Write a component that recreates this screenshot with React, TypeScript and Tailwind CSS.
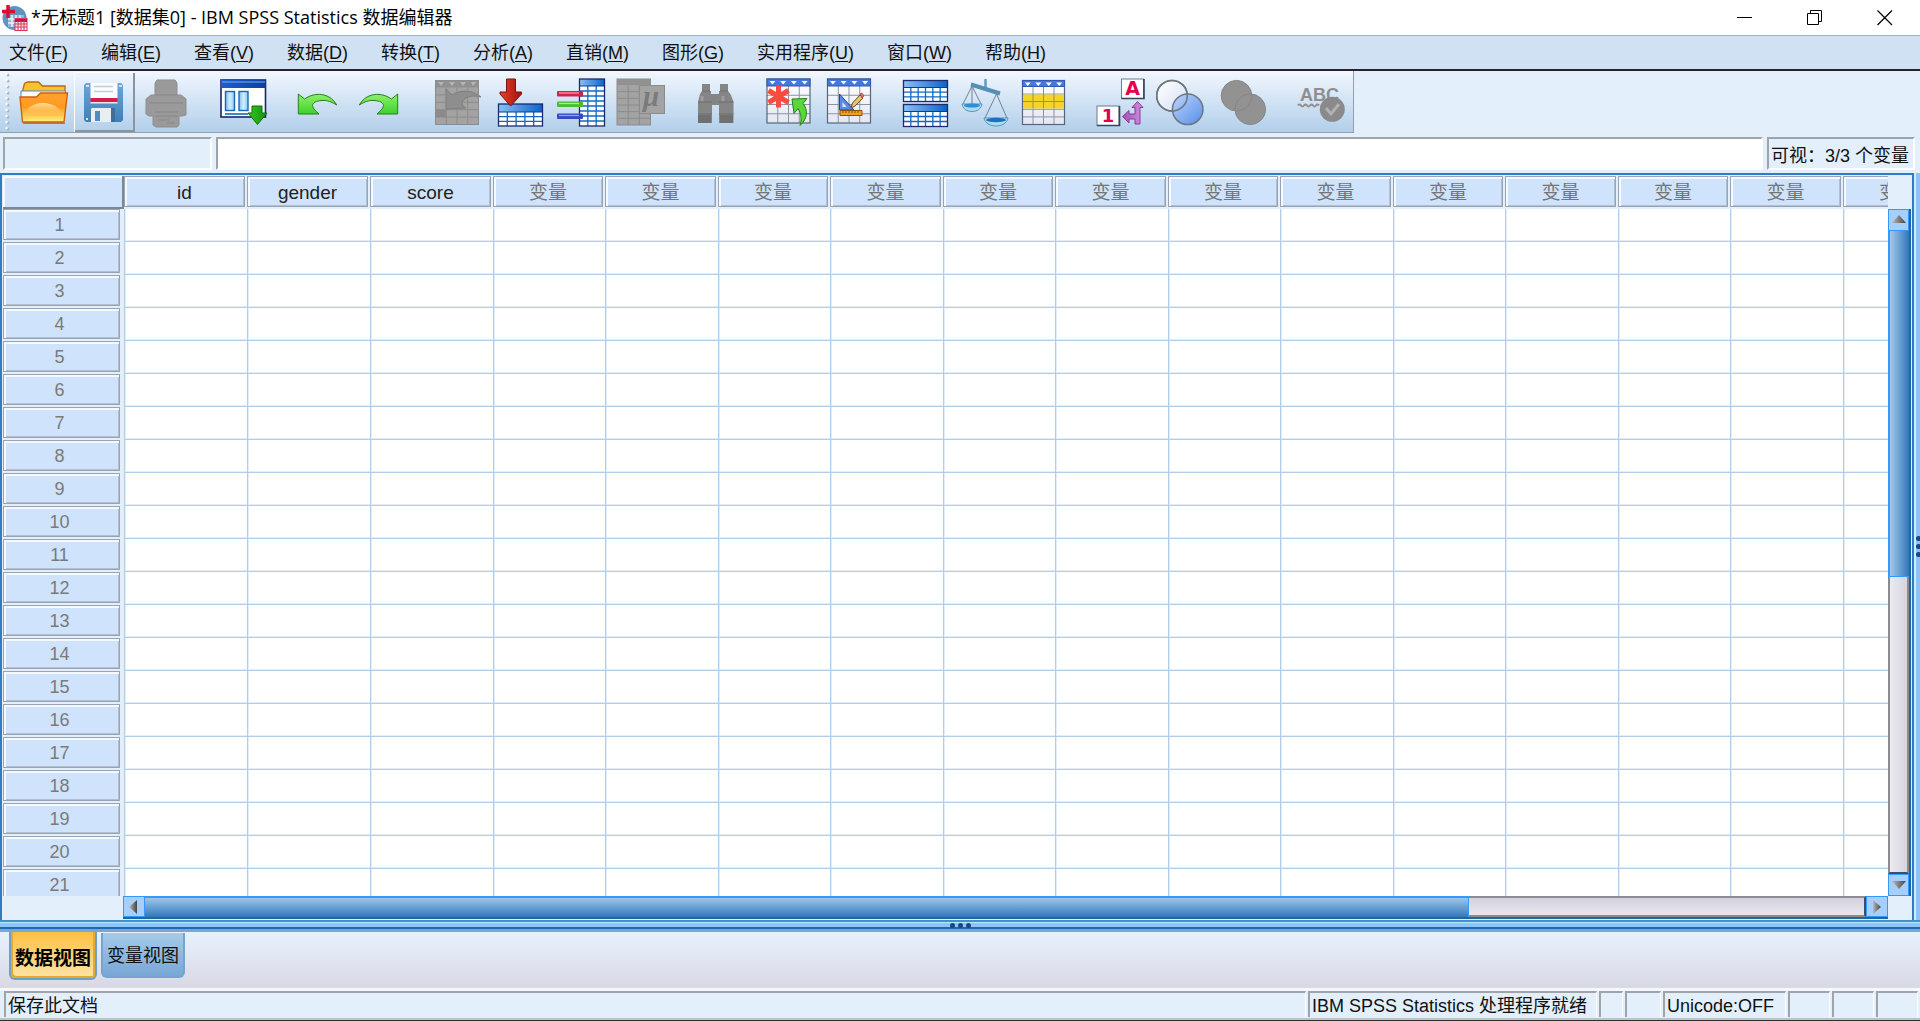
import React from 'react';

const MENUS = [
    ['文件', 'F'], ['编辑', 'E'], ['查看', 'V'], ['数据', 'D'], ['转换', 'T'], ['分析', 'A'],
    ['直销', 'M'], ['图形', 'G'], ['实用程序', 'U'], ['窗口', 'W'], ['帮助', 'H'],
];

const VARIABLES = ['id', 'gender', 'score'];
const EMPTY_COLS = Array.from({ length: 13 }, (_, i) => i);
const ROWS = Array.from({ length: 21 }, (_, i) => i + 1);

// Evenly spaced grid lines inside a box
function gridPath(x: number, y: number, w: number, h: number, cols: number, rows: number) {
    let d = '';
    for (let c = 1; c < cols; c++) d += `M${x + (w * c) / cols} ${y}v${h}`;
    for (let r = 1; r < rows; r++) d += `M${x} ${y + (h * r) / rows}h${w}`;
    return d;
}

type SheetProps = { x: number; y: number; w: number; h: number; head: number; cols: number; rows: number };

function BlueTable({ x, y, w, h, head, cols, rows }: SheetProps) {
    return (
        <g>
            <rect x={x} y={y} width={w} height={h} fill="#fff" />
            <path d={gridPath(x, y + head, w, h - head, cols, rows)} stroke="#1368c4" strokeWidth="1.3" fill="none" />
            <rect x={x} y={y} width={w} height={head} fill="url(#blueHead)" />
            <path d={`M${x} ${y + head}h${w}`} stroke="#0b3f86" />
            <rect x={x} y={y} width={w} height={h} fill="none" stroke="#1d2a6b" strokeWidth="1.3" />
        </g>
    );
}

function Sheet({ x, y, w, h, head, cols, rows }: SheetProps) {
    return (
        <g>
            <rect x={x} y={y} width={w} height={h} fill="url(#sheetBody)" />
            <path d={gridPath(x, y + head, w, h - head, cols, rows)} stroke="#8a93a3" fill="none" />
            <rect x={x} y={y} width={w} height={h} fill="none" stroke="#59647a" strokeWidth="1.2" />
            <rect x={x} y={y} width={w} height={head} fill="#4478dd" stroke="#3157b5" />
            {Array.from({ length: cols }, (_, i) => (
                <path key={i} d={`M${x + (w * (i + 0.5)) / cols - 3} ${y + 2}h6l-3 3.5z`} fill="#fff" />
            ))}
        </g>
    );
}

function GreySheet({ x, y, w, h, head, cols, rows }: SheetProps) {
    return (
        <g>
            <rect x={x} y={y} width={w} height={h} fill="#a3a3a3" stroke="#8b8b8b" />
            <path d={gridPath(x, y + head, w, h - head, cols, rows)} stroke="#8b8b8b" fill="none" />
            <rect x={x} y={y} width={w} height={head} fill="#919191" />
        </g>
    );
}

function IconDefs() {
    return (
        <svg className="absolute h-0 w-0" aria-hidden="true">
            <defs>
                <linearGradient id="blueHead" x1="0" x2="1" y1="0" y2="0">
                    <stop offset="0" stopColor="#8cc0f5" />
                    <stop offset="1" stopColor="#0b62cc" />
                </linearGradient>
                <linearGradient id="titleHead" x1="0" x2="1" y1="0" y2="0">
                    <stop offset="0" stopColor="#1b5fd0" />
                    <stop offset="1" stopColor="#0d3f9e" />
                </linearGradient>
                <linearGradient id="sheetBody" x1="0" x2="0" y1="0" y2="1">
                    <stop offset="0" stopColor="#ffffff" />
                    <stop offset="1" stopColor="#e3e7f2" />
                </linearGradient>
                <linearGradient id="folderFront" x1="0" x2="0" y1="0" y2="1">
                    <stop offset="0" stopColor="#ffa12e" />
                    <stop offset="0.5" stopColor="#ff9a20" />
                    <stop offset="1" stopColor="#fff27a" />
                </linearGradient>
                <linearGradient id="folderShine" x1="0" x2="0" y1="0" y2="1">
                    <stop offset="0" stopColor="#ffdf9a" />
                    <stop offset="1" stopColor="#ffb94a" stopOpacity="0.2" />
                </linearGradient>
                <linearGradient id="disk" x1="0" x2="0" y1="0" y2="1">
                    <stop offset="0" stopColor="#6ea6d6" />
                    <stop offset="1" stopColor="#3f7fb5" />
                </linearGradient>
                <linearGradient id="pane" x1="0" x2="1" y1="0" y2="0">
                    <stop offset="0" stopColor="#7fc0f0" />
                    <stop offset="0.5" stopColor="#d5edfc" />
                    <stop offset="1" stopColor="#8cc8f2" />
                </linearGradient>
                <linearGradient id="green" x1="0" x2="0" y1="0" y2="1">
                    <stop offset="0" stopColor="#8df26a" />
                    <stop offset="1" stopColor="#3fd02c" />
                </linearGradient>
                <linearGradient id="darkGreen" x1="0" x2="1" y1="0" y2="0">
                    <stop offset="0" stopColor="#35c81e" />
                    <stop offset="1" stopColor="#138f12" />
                </linearGradient>
                <linearGradient id="red" x1="0" x2="1" y1="0" y2="0">
                    <stop offset="0" stopColor="#e8402c" />
                    <stop offset="1" stopColor="#a1130b" />
                </linearGradient>
                <linearGradient id="purple" x1="0" x2="1" y1="0" y2="0">
                    <stop offset="0" stopColor="#a44fb5" />
                    <stop offset="1" stopColor="#d08fe0" />
                </linearGradient>
                <linearGradient id="circleWhite" x1="0" x2="1" y1="0" y2="1">
                    <stop offset="0" stopColor="#ffffff" />
                    <stop offset="1" stopColor="#d5e0f5" />
                </linearGradient>
                <linearGradient id="circleBlue" x1="0" x2="1" y1="0" y2="1">
                    <stop offset="0" stopColor="#b9d2fa" />
                    <stop offset="1" stopColor="#4c87ea" />
                </linearGradient>
                <linearGradient id="arrowGrey" x1="0" x2="1" y1="0" y2="0">
                    <stop offset="0" stopColor="#b8b8b8" />
                    <stop offset="1" stopColor="#444444" />
                </linearGradient>
            </defs>
        </svg>
    );
}

const UNDO = 'M11.3 22L17.5 27C24 22.5 31 21.5 37 23C43 24.5 47 28 49.7 33C45 30 40 28 35 28.5C29 29 26 30.5 25.5 33.5C26 37 29 39 32 42H11.3Z';

const OpenIcon = (
    <>
        <path d="M12 50.5h38l2 1H10z" stroke="#7b8794" fill="none" />
        <path d="M9 26L10 17l1.500-5.500 3-1.500h11l4 4H52v14z" fill="#fbc02d" stroke="#b76a12" strokeWidth="1.3" />
        <path d="M8 19h44.500v8H8z" fill="#f8fbff" stroke="#4a90d9" />
        <path d="M7 25h16.500l4-4H54.500L51 50H9.500z" fill="url(#folderFront)" stroke="#d0600f" strokeWidth="1.4" />
        <path d="M10 44C12 36 22 30 32 31c8 1 15 4 18 13z" fill="url(#folderShine)" />
    </>
);

const SaveIcon = (
    <>
        <path d="M10 13l2-2h35l2 2v35l-2 2H12l-2-2z" fill="url(#disk)" />
        <path d="M16.500 11h27v15h-27z" fill="#fafcfe" />
        <path d="M16.500 26h27v4h-27z" fill="#d81b48" />
        <path d="M16.500 30h27v1.500h-27z" fill="#f4e6ea" />
        <path d="M20 14.500h19M20 19.500h19" stroke="#c3cbd4" strokeWidth="1.4" />
        <path d="M17 37l1-1h22l1 1v13H17z" fill="#e9eef3" />
        <path d="M37 36h4v14h-4z" fill="#3f6f96" />
        <path d="M21 39h5v10h-5z" fill="#4d8dc2" />
        <path d="M12 14h3M45 14h3M12 47h2" stroke="#cfe3f4" strokeWidth="2" />
    </>
);

const PrintIcon = (
    <>
        <path d="M22 8h18l2 3v12h4l5 4v16l-4 1h-3v9l-2 2H21l-3-2v-9h-4l-3-2V27l5-4h4V11z" fill="#9a9a9a" stroke="#8d8d8d" />
        <path d="M20 23h22M14 31h34M20 40h23M20 44h23M23 48h11M32 51h8" stroke="#858585" strokeWidth="1.2" fill="none" />
    </>
);

const GotoIcon = (
    <>
        <rect x="10" y="8" width="44.500" height="37" fill="#fff" stroke="#1a2566" strokeWidth="1.6" />
        <rect x="10" y="8" width="44.500" height="8" fill="url(#titleHead)" />
        <path d="M11 10h43" stroke="#7ab0f0" />
        <rect x="14.500" y="19.500" width="9" height="19" fill="url(#pane)" stroke="#1668b8" strokeWidth="1.4" />
        <rect x="28" y="19.500" width="9" height="19" fill="url(#pane)" stroke="#1668b8" strokeWidth="1.4" />
        <path d="M14 42h23" stroke="#1668b8" strokeWidth="1.6" />
        <path d="M41 34h10v7h5L46.500 52.500 37 41h4z" fill="url(#darkGreen)" stroke="#0d6e10" />
    </>
);

const UndoIcon = <path d={UNDO} fill="url(#green)" stroke="#23801a" />;
const RedoIcon = <path d={UNDO} transform="matrix(-1 0 0 1 61 0)" fill="url(#green)" stroke="#23801a" />;

const RecallIcon = (
    <>
        <GreySheet x={11.5} y={8.5} w={43} h={44} head={7} cols={4} rows={5} />
        <path d="M14 10h6l-3 4zM25 10h6l-3 4zM36 10h6l-3 4zM47 10h5l-3 4z" fill="#b4b4b4" />
        <path d="M12 38h10v7H12z" fill="#8b8b8b" />
        <path d="M22 17l6 6c8-5 20-6 29 2-8-2-15-1-19 5 0 3 2 5 4 6l-20 1z" fill="#8e8e8e" stroke="#808080" />
    </>
);

const InsertCaseIcon = (
    <>
        <BlueTable x={13.5} y={32} w={44} h={22} head={8} cols={5} rows={3} />
        <path d="M21.500 7h9v13h6v2L25.700 34 15 22v-2h6.500z" fill="url(#red)" stroke="#7c120c" />
    </>
);

const InsertVarIcon = (
    <>
        <BlueTable x={33.5} y={7} w={25} h={47} head={7} cols={3} rows={8} />
        <rect x="11" y="19" width="26" height="5.500" rx="1" fill="#d3214f" />
        <rect x="11" y="29.500" width="26" height="5.500" rx="1" fill="#4cbb30" />
        <rect x="11" y="41.500" width="26" height="5.500" rx="1" fill="#3348c8" />
        <path d="M13 21h20" stroke="#ff9a9a" strokeWidth="1.300" />
        <path d="M13 31.500h20" stroke="#a8f080" strokeWidth="1.300" />
        <path d="M13 43.500h20" stroke="#8fa4ff" strokeWidth="1.300" />
    </>
);

const MuIcon = (
    <>
        <GreySheet x={10} y={7} w={33.5} h={46} head={6} cols={3} rows={6} />
        <rect x="32.500" y="13.500" width="25" height="28" fill="#a3a3a3" stroke="#8b8b8b" />
        <text x="36" y="34" fontSize="29" fontStyle="italic" fontWeight="bold" fontFamily="Liberation Serif" fill="#7b7b7b">μ</text>
    </>
);

const FindIcon = (
    <>
        <path d="M19 12h8v7h1v3h8v-3h1v-7h8v7l3 4 2.500 7v21H36V33h-7v18H15V30l2-8 2-3z" fill="#858585" />
        <path d="M15 30h14M36 30h14.500M15 42h14M36 42h14.500M19 19h8M37 19h8" stroke="#6f6f6f" />
        <path d="M19 24v5M40 24v5" stroke="#9d9d9d" strokeWidth="3" />
        <path d="M15 43h13v8H15zM37 43h13v8H37z" fill="#707070" />
    </>
);

const MissingIcon = (
    <>
        <Sheet x={8} y={7} w={43} h={44} head={7} cols={4} rows={4} />
        <path d="M19.500 13.500v22M9.500 18.500l20 12M29.500 18.500l-20 12" stroke="#fa4c3e" strokeWidth="5" />
        <path d="M33 27l15-.500-4 5c5 6 5 15-3 22 2-6 1-12-2-17l-4 5z" fill="#5ad838" stroke="#23801a" />
    </>
);

const DesignIcon = (
    <>
        <Sheet x={7.5} y={7} w={43} h={44} head={7} cols={4} rows={4} />
        <path d="M19.500 22v16H34z" fill="#5b8ae8" stroke="#2244a8" />
        <path d="M22.500 30v5h4z" fill="#dfe8fb" />
        <path d="M31 36l1.500-5L40 23l3 3-8 8z" fill="#e5c66a" stroke="#6e4a18" />
        <path d="M40 22l2-1 2 3-2 2z" fill="#e07070" stroke="#8d3030" strokeWidth="0.600" />
        <path d="M20 38.500h22v5H20z" fill="#f0a020" stroke="#8a5208" />
        <path d="M23 39v2M26 39v2M29 39v2M32 39v2M35 39v2M38 39v2" stroke="#8a5208" />
    </>
);

const SplitIcon = (
    <>
        <BlueTable x={7.5} y={8.5} w={44} h={21} head={7} cols={6} rows={3} />
        <BlueTable x={7.5} y={32.5} w={44} h={22} head={7} cols={6} rows={3} />
    </>
);

const WeightIcon = (
    <>
        <path d="M28.500 7v9" stroke="#5f9bbb" strokeWidth="2.500" />
        <path d="M14 12.500l29 9" stroke="#5390b4" strokeWidth="4" />
        <path d="M15 14L6 32M15 14l9 18M15 14v18M39.500 22L28 46M39.500 22L50 46" stroke="#6c8498" fill="none" />
        <path d="M5 32h20c-1 5-5 7.500-10 7.500S6 37 5 32z" fill="#a9dcf5" stroke="#5a94b8" />
        <ellipse cx="15" cy="33.500" rx="8" ry="2" fill="#2e8fd0" />
        <path d="M27 46h24c-1 5-6 8-12 8s-11-3-12-8z" fill="#a9dcf5" stroke="#5a94b8" />
        <ellipse cx="39" cy="48" rx="10" ry="2.200" fill="#1f6fc0" />
    </>
);

const SelectIcon = (
    <>
        <Sheet x={4.5} y={8.5} w={42} h={44} head={6} cols={4} rows={5} />
        <path d="M5 22.500h41v14H5z" fill="#f5d327" />
        <path d="M5 29.500h41M15 22v14M25.500 22v14M36 22v14" stroke="#a89040" />
    </>
);

const LabelsIcon = (
    <>
        <rect x="27.500" y="7" width="22" height="19.500" fill="#fff" stroke="#6c7b90" />
        <path d="M27.500 26.500h22.500V7" fill="none" stroke="#35445c" strokeWidth="1.600" />
        <text x="38.500" y="23" textAnchor="middle" fontSize="19" fontWeight="bold" fontFamily="DejaVu Sans" fill="#e5004f">A</text>
        <rect x="3" y="34" width="22" height="19.500" fill="#fff" stroke="#6c7b90" />
        <path d="M3 53.500h22.500V34" fill="none" stroke="#35445c" strokeWidth="1.600" />
        <text x="14" y="50" textAnchor="middle" fontSize="18" fontWeight="bold" fontFamily="DejaVu Sans" fill="#e5004f">1</text>
        <path d="M43.500 29.500l5.500 6h-3V52h-5v-5h-6v4l-6.500-6.500 6.500-6V42h6v-6.500h-3z" fill="url(#purple)" stroke="#8a3a9c" />
    </>
);

const SetsIcon = (
    <>
        <circle cx="17" cy="23.700" r="15.300" fill="url(#circleWhite)" stroke="#6d7580" strokeWidth="1.500" />
        <circle cx="32.700" cy="37.300" r="15.300" fill="url(#circleBlue)" fillOpacity="0.900" stroke="#6d7580" strokeWidth="1.500" />
        <circle cx="17" cy="23.700" r="15.300" fill="none" stroke="#6d7580" strokeWidth="1.500" />
    </>
);

const AllVarsIcon = (
    <>
        <circle cx="20.500" cy="23.700" r="15.300" fill="#929292" />
        <circle cx="34.300" cy="37.300" r="15.300" fill="#929292" />
        <circle cx="20.500" cy="23.700" r="15.300" fill="none" stroke="#868686" />
        <circle cx="34.300" cy="37.300" r="15.300" fill="none" stroke="#868686" />
    </>
);

const SpellIcon = (
    <>
        <text x="8" y="29" fontSize="18" fontWeight="bold" fontFamily="Liberation Sans" fill="#8f8f8f">ABC</text>
        <path d="M6 33.500q1.500-2 3 0t3 0 3 0 3 0 3 0 3 0 3 0" fill="none" stroke="#8f8f8f" strokeWidth="2" />
        <circle cx="40.300" cy="37.300" r="12.500" fill="#8a8a8a" />
        <path d="M34 36l5 6 8-10" fill="none" stroke="#b2b2b2" strokeWidth="3" />
    </>
);

const TOOL_GROUPS = [
    [['打开', OpenIcon], ['保存此文档', SaveIcon], ['打印', PrintIcon]],
    [['重新调用最近使用的对话框', GotoIcon]],
    [['撤消', UndoIcon], ['恢复', RedoIcon]],
    [['转到个案', RecallIcon], ['插入个案', InsertCaseIcon], ['插入变量', InsertVarIcon], ['描述统计', MuIcon]],
    [['查找', FindIcon]],
    [['缺失值', MissingIcon], ['设计', DesignIcon]],
    [['拆分文件', SplitIcon], ['加权个案', WeightIcon], ['选择个案', SelectIcon]],
    [['值标签', LabelsIcon], ['使用变量集', SetsIcon], ['显示所有变量', AllVarsIcon]],
    [['拼写检查', SpellIcon]],
] as [string, React.ReactNode][][];

function TitleBar() {
    return (
        <header className="flex h-9 shrink-0 items-center border-b border-[#a5b3c1] bg-white">
            <svg viewBox="0 0 26 26" className="ml-[2px] h-[26px] w-[26px]">
                <circle cx="12.500" cy="13" r="12" fill="#5f93c0" />
                <path d="M6 10h16v12H6z" fill="#8fb6d8" />
                <path d="M6 14h16M6 18h16M10 10v12M14 10v12M18 10v12" stroke="#e8f2fa" strokeWidth="1.500" />
                <path d="M6 0v13M0 6.500h13" stroke="#d80f35" strokeWidth="3.500" />
                <rect x="13" y="13.500" width="12" height="12" fill="#fbe8ec" stroke="#d4375a" />
                <path d="M13 15.500h12" stroke="#c9183f" strokeWidth="3" />
                <path d="M13 19h12M13 22h12M16 16v10M19 16v10M22 16v10" stroke="#d4375a" />
            </svg>
            <h1 className="ml-[3px] flex-1 whitespace-pre pb-px font-['Open_Sans','Noto_Sans_CJK_SC',sans-serif] text-[18px] text-black">
                *无标题1 [数据集0] - IBM SPSS Statistics 数据编辑器
            </h1>
            <button aria-label="最小化" className="flex h-9 w-[70px] items-center justify-center">
                <svg viewBox="0 0 16 16" className="h-4 w-4"><path d="M0 7.500h15" stroke="#000" /></svg>
            </button>
            <button aria-label="还原" className="flex h-9 w-[70px] items-center justify-center">
                <svg viewBox="0 0 16 16" className="h-4 w-4"><path d="M.500 3.500h11v11H.500zM3.500 3.500v-3h11v11h-3" fill="none" stroke="#000" /></svg>
            </button>
            <button aria-label="关闭" className="flex h-9 w-[70px] items-center justify-center">
                <svg viewBox="0 0 16 16" className="h-4 w-4"><path d="M.500 .500l14.500 14.500M15 .500L.500 15" stroke="#000" strokeWidth="1.200" /></svg>
            </button>
        </header>
    );
}

function MenuBar() {
    return (
        <nav className="flex h-[35px] shrink-0 items-center gap-[33px] border-b-2 border-[#26242a] bg-[#cfe1f2] px-[9px] pt-px">
            {MENUS.map(([label, key]) => (
                <button key={key} className="whitespace-nowrap leading-6">
                    {label}(<span className="underline underline-offset-2">{key}</span>)
                </button>
            ))}
        </nav>
    );
}

function ToolBar() {
    return (
        <div className="flex h-[62px] shrink-0 bg-[#e3effb]">
            <div className="flex border-b border-r border-[#969fa9] bg-linear-to-b from-[#f1f7fe] to-[#b2cfea] pt-px">
                {/* Drag handle */}
                <svg viewBox="0 0 13 60" className="h-[60px] w-[13px]">
                    {[2, 8, 14, 20, 26, 32, 38, 44, 50, 56].map((y) => (
                        <g key={y}>
                            <circle cx="8" cy={y + 1} r="1.500" fill="#a9b5c3" />
                            <circle cx="6.500" cy={y} r="1.200" fill="#fff" />
                        </g>
                    ))}
                </svg>
                <div className="flex gap-[15px]">
                    {TOOL_GROUPS.map((group, i) => (
                        <div key={i} className="flex">
                            {group.map(([label, icon]) => (
                                <button
                                    key={label}
                                    aria-label={label}
                                    className={
                                        label === '保存此文档'
                                            ? 'h-[60px] w-[61px] shadow-[inset_1px_1px_0_#ffffff,inset_-2px_-2px_0_#8b95a1]'
                                            : 'h-[60px] w-[61px]'
                                    }
                                >
                                    <svg viewBox="0 0 61 60" className="h-[60px] w-[61px]">{icon}</svg>
                                </button>
                            ))}
                        </div>
                    ))}
                </div>
            </div>
        </div>
    );
}

function EditRow() {
    return (
        <div className="flex h-10 shrink-0 gap-1 bg-[#e3effb] py-1 pl-[3px] pr-[5px]">
            <input aria-label="单元格" readOnly className="h-[33px] w-[209px] border-2 border-b-white border-l-[#a0a3a8] border-r-white border-t-[#a0a3a8] bg-[#e3effb] px-1 outline-none" />
            <input aria-label="单元格值" className="h-[33px] min-w-0 flex-1 border-2 border-b-white border-l-[#a0a3a8] border-r-white border-t-[#a0a3a8] bg-white px-1 outline-none" />
            <div className="h-[33px] whitespace-nowrap border-2 border-b-white border-l-[#a0a3a8] border-r-white border-t-[#a0a3a8] pl-[2px] pr-1 leading-[34px]">
                可视：3/3 个变量
            </div>
        </div>
    );
}

function ColHead({ children, muted }: { children: React.ReactNode; muted?: boolean }) {
    return (
        <th scope="col" className="h-[33px] p-0 pb-[2px] pr-[2px] font-normal">
            <div className={`flex h-[31px] items-center justify-center border border-[#98a3b5] bg-[#cfe3fc] pt-[3px] text-[19px] leading-6 shadow-[inset_2px_2px_0_#f4f9ff,inset_-1px_-1px_0_#b4bfce] ${muted ? 'text-[#757575]' : 'text-[#222222]'}`}>
                {children}
            </div>
        </th>
    );
}

function DataTable() {
    return (
        <div className="min-h-0 flex-1 overflow-hidden">
            <table className="w-[2078px] table-fixed border-separate border-spacing-0">
                <colgroup>
                    <col className="w-[121px]" />
                    {VARIABLES.map((v) => <col key={v} className="w-[123px]" />)}
                    {EMPTY_COLS.map((i) => <col key={i} className={i % 2 ? 'w-[113px]' : 'w-[112px]'} />)}
                    <col />
                </colgroup>
                <thead>
                    <tr>
                        <td className="h-[33px] border-b-2 border-r-2 border-[#7f8795] bg-[#cfe3fc] p-0 shadow-[inset_2px_2px_0_#f4f9ff]" />
                        {VARIABLES.map((v) => <ColHead key={v}>{v}</ColHead>)}
                        {EMPTY_COLS.map((i) => <ColHead key={i} muted>变量</ColHead>)}
                        <td />
                    </tr>
                </thead>
                <tbody>
                    {ROWS.map((row) => (
                        <tr key={row}>
                            <th scope="row" className="h-[33px] bg-[#e3effb] p-0 pb-[2px] pr-1 font-normal">
                                <div className="flex h-[31px] items-center justify-center border border-[#98a3b5] bg-[#cfe3fc] pr-1 pt-px text-[#7a7a7a] shadow-[inset_2px_2px_0_#f4f9ff,inset_-1px_-1px_0_#b4bfce]">
                                    {row}
                                </div>
                            </th>
                            {[...VARIABLES, ...EMPTY_COLS].map((c) => (
                                <td key={c} className="border-b border-l border-[#b0cdea] bg-white p-0 shadow-[inset_1px_-1px_0_#e3eefa]" />
                            ))}
                            <td className="bg-white" />
                        </tr>
                    ))}
                </tbody>
            </table>
        </div>
    );
}

function ScrollArrow({ label, d }: { label: string; d: string }) {
    return (
        <button aria-label={label} className="flex h-full w-full items-center justify-center border border-[#3399ff] bg-[#a6cffc]">
            <svg viewBox="0 0 14 14" className="h-[14px] w-[14px] shrink-0"><path d={d} fill="url(#arrowGrey)" /></svg>
        </button>
    );
}

function VerticalScroll() {
    return (
        <div className="flex w-[23px] shrink-0 flex-col border-r-2 border-[#1f66a8]">
            <div className="h-[22px] w-full"><ScrollArrow label="向上滚动" d="M0 10L7 2l7 8z" /></div>
            <div className="min-h-0 w-full flex-1 border-l-2 border-r-2 border-b-2 border-b-[#3a4d72] border-l-[#8c8c90] border-r-[#8c8c90] bg-linear-to-r from-[#ecebf0] to-[#d6d4de]">
                <div className="-mx-[2px] h-[54%] border-l-2 border-b border-[#3399ff] bg-linear-to-r from-[#a3c9ea] to-[#2f78bd]" />
            </div>
            <div className="h-[22px] w-full"><ScrollArrow label="向下滚动" d="M0 3l7 8 7-8z" /></div>
        </div>
    );
}

function HorizontalScroll() {
    return (
        <div className="flex h-[23px] min-w-0 flex-1 border-b-2 border-[#1f66a8]">
            <div className="h-full w-[22px]"><ScrollArrow label="向左滚动" d="M10 0L2 7l8 7z" /></div>
            <div className="h-full min-w-0 flex-1 border-b-2 border-r-2 border-t-2 border-b-[#8c8c90] border-r-[#3a4d72] border-t-[#8c8c90] bg-linear-to-b from-[#d3d1dc] to-[#e9e8ee]">
                <div className="-mt-[2px] h-[21px] w-[77%] border-r border-t-2 border-[#3399ff] bg-linear-to-b from-[#9cc6ea] to-[#2f78bd]" />
            </div>
            <div className="h-full w-[22px]"><ScrollArrow label="向右滚动" d="M3 0l8 7-8 7z" /></div>
        </div>
    );
}

function Dots({ vertical }: { vertical?: boolean }) {
    return (
        <div className={vertical ? 'flex flex-col gap-[3px]' : 'flex gap-[3px]'}>
            {[0, 1, 2].map((i) => <span key={i} className="h-[5px] w-[5px] rounded-full bg-[#1c4585]" />)}
        </div>
    );
}

function Workspace() {
    return (
        <main className="flex min-h-0 flex-1 bg-[#e3effb]">
            <div className="flex min-w-0 flex-1 border-l-2 border-r-2 border-t-2 border-[#2f7cc4] pl-px pt-px">
                <div className="flex min-w-0 flex-1 flex-col">
                    <div className="flex min-h-0 flex-1">
                        <DataTable />
                        <div className="flex pr-px pt-[33px]"><VerticalScroll /></div>
                    </div>
                    <div className="flex pb-px pl-[120px] pr-6"><HorizontalScroll /></div>
                </div>
            </div>
            {/* Right splitter */}
            <div className="flex w-[6px] shrink-0 flex-col items-center justify-center border-l-2 border-[#c5f0ff] bg-[#8fc1f7]">
                <Dots vertical />
            </div>
        </main>
    );
}

function ViewTabs() {
    return (
        <div role="tablist" className="flex h-[56px] shrink-0 items-start gap-1 bg-linear-to-b from-[#e6f2fd] to-[#d9d8e5] pl-[9px]">
            <button role="tab" aria-selected="true" className="h-12 rounded-b-md border-2 border-t-0 border-[#6f9fc4] bg-linear-to-b from-[#fdc03c] to-[#fee3a4] px-1 pt-2 text-[19px] font-bold text-black shadow-[inset_2px_-2px_0_#e3aa2f,inset_-2px_0_0_#e3aa2f]">
                数据视图
            </button>
            <button role="tab" aria-selected="false" className="mt-px h-[45px] rounded-b-md border-x-2 border-b-2 border-[#75a4d1] bg-linear-to-b from-[#a5cbe9] to-[#78a7d5] px-1 pt-1">
                变量视图
            </button>
        </div>
    );
}

function StatusCell({ className, children }: { className: string; children?: React.ReactNode }) {
    return (
        <div className={`h-[26px] shrink-0 whitespace-nowrap border-l-2 border-r border-t-2 border-l-[#a0a3a8] border-r-white border-t-[#a0a3a8] pl-[2px] leading-[26px] ${className}`}>
            {children}
        </div>
    );
}

function StatusBar() {
    return (
        <footer className="flex h-[33px] shrink-0 gap-[2px] border-b border-t-[3px] border-b-[#33302c] border-t-[#f5f9fe] bg-[#e3effb] pl-1 pr-[2px] shadow-[inset_0_-2px_0_#bfc2c6]">
            <StatusCell className="min-w-0 flex-1">保存此文档</StatusCell>
            <StatusCell className="w-[289px]">IBM SPSS Statistics 处理程序就绪</StatusCell>
            <StatusCell className="w-6" />
            <StatusCell className="w-9" />
            <StatusCell className="w-[123px]">Unicode:OFF</StatusCell>
            <StatusCell className="w-[42px]" />
            <StatusCell className="w-[42px]" />
            <StatusCell className="w-[42px]" />
        </footer>
    );
}

export default function App() {
    return (
        <div className="flex h-screen flex-col overflow-hidden bg-[#e3effb] font-['Liberation_Sans','Noto_Sans_CJK_SC',sans-serif] text-[18px] text-[#111111]">
            <IconDefs />
            <TitleBar />
            <MenuBar />
            <ToolBar />
            <EditRow />
            <Workspace />
            {/* Bottom splitter */}
            <div className="flex h-3 shrink-0 items-center justify-center border-b-[3px] border-t-2 border-b-[#7ba6d4] border-t-[#4a8ccb] bg-[#8fc4fb] shadow-[inset_0_1px_0_#b5e8ff,inset_0_-2px_0_#1f68b4]">
                <Dots />
            </div>
            <ViewTabs />
            <StatusBar />
        </div>
    );
}
